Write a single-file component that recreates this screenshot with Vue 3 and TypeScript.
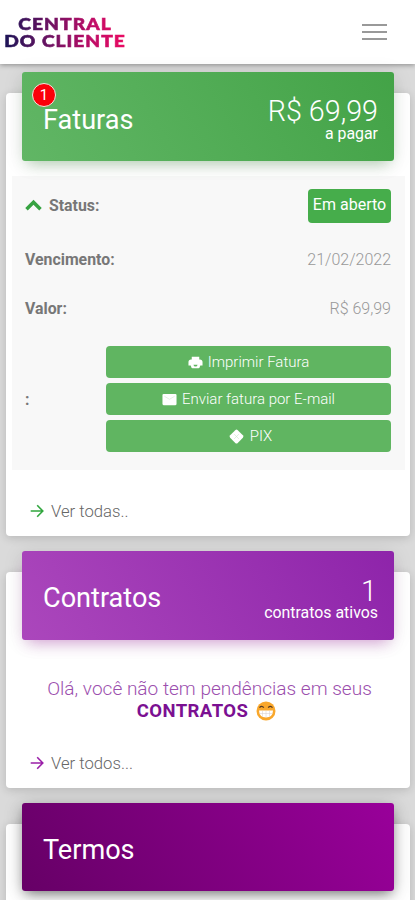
<script setup lang="ts">
interface InvoiceAction {
  label: string
  icon: 'print' | 'mail' | 'pix'
}

const actions: InvoiceAction[] = [
  { label: 'Imprimir Fatura', icon: 'print' },
  { label: 'Enviar fatura por E-mail', icon: 'mail' },
  { label: 'PIX', icon: 'pix' },
]
</script>

<template>
  <div class="page">
    <header class="topbar">
      <div class="logo">
        <span class="logo-top">CENTRAL</span>
        <span class="logo-bottom">DO CLIENTE</span>
      </div>
      <button class="menu" aria-label="Menu"><i></i><i></i><i></i></button>
    </header>

    <main class="cards">
      <section class="card invoices">
        <div class="banner green">
          <h2>Faturas<span class="badge">1</span></h2>
          <div class="summary">
            <strong>R$ 69,99</strong>
            <span>a pagar</span>
          </div>
        </div>
        <div class="panel">
          <div class="row status">
            <b><svg class="chevron" viewBox="0 0 17 12"><path d="M1.500 10.300 8.500 3.200l7 7.100" /></svg>Status:</b>
            <span class="tag">Em aberto</span>
          </div>
          <div class="row due"><b>Vencimento:</b><span>21/02/2022</span></div>
          <div class="row value"><b>Valor:</b><span>R$ 69,99</span></div>
          <div class="row buttons">
            <b>:</b>
            <div class="actions">
              <button v-for="a in actions" :key="a.icon" class="action" :class="a.icon">
                <svg v-if="a.icon === 'print'" class="icon" viewBox="0 0 16 16">
                  <path fill="#fff" d="M4 1.800h8v3h.8c1.600 0 2.700 1 2.700 2.600v3.900h-2.400q-.6 2.900-2 2.900H4.900q-1.400 0-2-2.900H.5V7.400c0-1.600 1.100-2.600 2.700-2.600H4z" />
                  <path fill="#60b561" d="M5.800 10.300h4.400q-.3 2-2.200 2t-2.200-2z" />
                </svg>
                <svg v-else-if="a.icon === 'mail'" class="icon" viewBox="0 0 16 16">
                  <rect x=".5" y="2" width="15" height="12" rx="1.200" fill="#fff" />
                  <path d="m2.500 4.500 5.500 3.300 5.500-3.300" fill="none" stroke="#d5ecd5" stroke-width=".7" />
                </svg>
                <svg v-else class="icon" viewBox="0 0 16 16">
                  <path fill="#fff" d="M6.700 1.200q1.300-1.200 2.600 0l5.500 5.500q1.200 1.300 0 2.600l-5.500 5.500q-1.300 1.200-2.600 0L1.200 9.300q-1.200-1.300 0-2.600z" />
                  <path d="m5.500 5.500 5 5M10.500 5.500l-5 5" stroke="#c8e6c8" stroke-width=".6" />
                </svg>
                <span>{{ a.label }}</span>
              </button>
            </div>
          </div>
        </div>
        <a class="more"><svg class="arrow" viewBox="0 0 14 14"><path d="M.7 7h11.800M7.200 1.300 12.800 7l-5.600 5.700" /></svg><span>Ver todas..</span></a>
      </section>

      <section class="card contracts">
        <div class="banner purple">
          <h2>Contratos</h2>
          <div class="summary">
            <strong>1</strong>
            <span>contratos ativos</span>
          </div>
        </div>
        <div class="message">
          <p>Olá, você não tem pendências em seus</p>
          <p class="msg-strong">
            <b>CONTRATOS</b>
            <svg class="emoji" viewBox="0 0 20 20">
              <circle cx="10" cy="10" r="9.500" fill="#f9a72b" />
              <path d="M3.500 6.600q2.200-2.500 4.300 0M12.200 6.600q2.200-2.500 4.300 0" fill="none" stroke="#573b22" stroke-width="1.400" />
              <path d="M3 9.500h14q-.3 7-7 7t-7-7z" fill="#fff" />
              <path d="M3.600 12.500h12.800M6.500 9.500v6M10 9.500v7M13.500 9.500v6" stroke="#d9cfd0" stroke-width=".55" />
            </svg>
          </p>
        </div>
        <a class="more violet"><svg class="arrow" viewBox="0 0 14 14"><path d="M.7 7h11.800M7.200 1.300 12.800 7l-5.600 5.700" /></svg><span>Ver todos...</span></a>
      </section>

      <section class="card terms">
        <div class="banner plum"><h2>Termos</h2></div>
      </section>
    </main>
  </div>
</template>

<style>
body {
  margin: 0;
  background: #dadada;
}
</style>

<style scoped>
.page {
  box-sizing: border-box;
  width: 415px;
  height: 900px;
  overflow: hidden;
  background: #dadada;
  font-family: Roboto, "Liberation Sans", sans-serif;
  color: #707070;
}
.topbar {
  position: relative;
  box-sizing: border-box;
  height: 64px;
  display: flex;
  justify-content: space-between;
  padding: 14px 28px 0 4px;
  background: #fff;
  box-shadow: 0 1px 5px rgba(0, 0, 0, 0.36);
}
.logo {
  width: 109px;
  height: 34px;
  padding-top: 1px;
  transform: scaleX(1.11);
  transform-origin: 0 0;
  display: flex;
  flex-direction: column;
  align-items: center;
  font: 900 17.300px/17px Lato, sans-serif;
  white-space: nowrap;
  color: transparent;
  -webkit-text-stroke: 0.600px transparent;
  background: linear-gradient(90deg, #1b1456 0%, #6d1262 38%, #bd0c66 72%, #ea0b62 100%);
  -webkit-background-clip: text;
  background-clip: text;
}
.logo-top {
  letter-spacing: 1px;
  margin-left: 1px;
}
.logo-bottom {
  letter-spacing: 0.900px;
  margin-right: -0.900px;
}
.menu {
  width: 25px;
  height: 16px;
  margin-top: 10px;
  padding: 0;
  border: 0;
  background: none;
  display: flex;
  flex-direction: column;
  justify-content: space-between;
}
.menu i {
  height: 2px;
  background: #999;
}
.cards {
  display: flex;
  flex-direction: column;
  gap: 36px;
  padding: 29px 5px 0 6px;
}
.card {
  box-sizing: border-box;
  flex-shrink: 0;
  display: flex;
  flex-direction: column;
  background: #fff;
  border-radius: 4px;
  box-shadow: 0 2px 10px rgba(0, 0, 0, 0.16);
}
.invoices { height: 443px; }
.contracts { height: 216px; }
.terms { height: 216px; }
.banner {
  position: relative;
  box-sizing: border-box;
  flex-shrink: 0;
  height: 89px;
  margin: -21px 16px 0;
  padding: 0 16px 0 21px;
  display: flex;
  justify-content: space-between;
  align-items: center;
  border-radius: 3px;
  color: #fff;
}
.green {
  background: linear-gradient(60deg, #61b665, #43a347);
  box-shadow: 0 8px 14px -6px rgba(60, 140, 60, 0.36), 0 2px 20px rgba(0, 0, 0, 0.1);
}
.purple {
  background: linear-gradient(60deg, #ab47bc, #8e24aa);
  box-shadow: 0 8px 14px -6px rgba(176, 39, 176, 0.4), 0 2px 20px rgba(0, 0, 0, 0.1);
}
.plum {
  height: 88px;
  background: linear-gradient(60deg, #660066, #99009a);
  box-shadow: 0 5px 12px -3px rgba(0, 0, 0, 0.5), 0 2px 20px rgba(0, 0, 0, 0.16);
}
h2 {
  position: relative;
  margin: 6px 0 0;
  font-size: 27.100px;
  font-weight: 400;
  line-height: 32px;
}
.purple h2 { margin-top: 5px; }
.plum h2 { margin-top: 6px; }
.badge {
  position: absolute;
  left: -11px;
  top: -21px;
  box-sizing: border-box;
  width: 24px;
  height: 24px;
  border: 1px solid #efeadf;
  border-radius: 50%;
  background: #fb0009;
  font-size: 15px;
  line-height: 22px;
  text-align: center;
}
.summary {
  display: flex;
  flex-direction: column;
  align-items: flex-end;
  font-size: 15.900px;
  line-height: 18px;
}
.summary strong {
  font-size: 28.700px;
  font-weight: 300;
  line-height: 27px;
}
.green .summary { padding-top: 7px; }
.purple .summary { padding-top: 8px; }
.purple .summary strong {
  margin-right: 1px;
  line-height: 26px;
}
.panel {
  box-sizing: border-box;
  height: 294px;
  margin: 15px 5px 0 6px;
  padding: 0 14px 0 13px;
  background: #f8f8f8;
  font-size: 16px;
}
.row {
  display: flex;
  justify-content: space-between;
  align-items: center;
  font-weight: 300;
  color: #999;
}
.row b {
  display: flex;
  align-items: center;
  color: #777;
  font-size: 15.850px;
  font-weight: 700;
}
.status { height: 58px; }
.due { height: 51px; }
.value { height: 46px; }
.buttons { padding-top: 15px; }
.chevron {
  width: 17px;
  height: 12px;
  margin-right: 7px;
}
.chevron path {
  fill: none;
  stroke: #36a341;
  stroke-width: 3.500;
}
.tag {
  box-sizing: border-box;
  width: 83px;
  height: 34px;
  margin-top: 2px;
  border-radius: 4px;
  background: #46ad4b;
  color: #fff;
  font-weight: 400;
  line-height: 32px;
  text-align: center;
}
.actions {
  width: 285px;
  display: flex;
  flex-direction: column;
  gap: 5px;
}
.action {
  height: 32px;
  padding: 0 0 1px;
  border: 0;
  border-radius: 4px;
  background: #60b561;
  color: #fff;
  font: 300 15px/20px Roboto, sans-serif;
  display: flex;
  align-items: center;
  justify-content: center;
  gap: 5px;
}
.pix {
  gap: 6px;
  padding-left: 4px;
}
.icon {
  width: 15px;
  height: 15px;
  margin-top: 1px;
}
.more {
  display: flex;
  align-items: center;
  gap: 7px;
  height: 20px;
  margin: 31px 0 0 24px;
  color: #666;
  font-size: 16.700px;
  font-weight: 300;
}
.arrow {
  width: 14px;
  height: 14px;
}
.arrow path {
  fill: none;
  stroke: #31a63e;
  stroke-width: 1.600;
}
.violet .arrow path { stroke: #9a1fa8; }
.message {
  padding: 37px 0 0 3px;
  color: #9c4fae;
  text-align: center;
}
.message p {
  margin: 0;
  height: 23px;
  font-size: 19.060px;
  font-weight: 300;
  line-height: 23px;
  white-space: nowrap;
}
.message .msg-strong {
  height: 22px;
  margin-left: -6px;
  display: flex;
  align-items: center;
  justify-content: center;
  gap: 8px;
}
.msg-strong b {
  color: #7b1092;
  font-size: 18.500px;
  font-weight: 700;
  letter-spacing: 0.450px;
}
.emoji {
  width: 20px;
  height: 20px;
}
</style>
